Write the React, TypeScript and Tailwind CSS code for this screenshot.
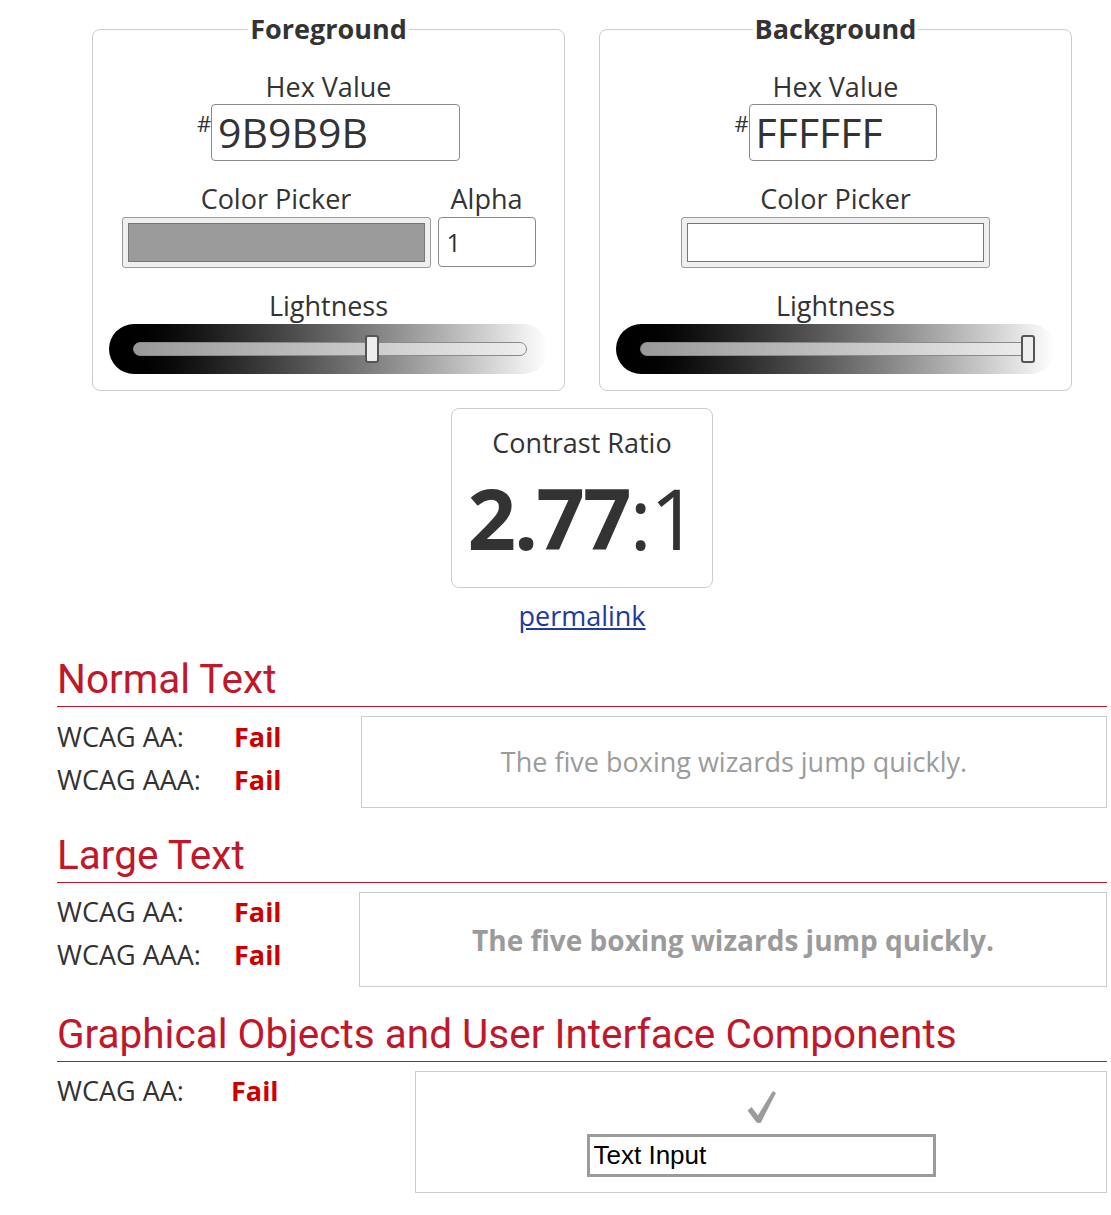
import React from "react";

interface ColorPanelProps {
  title: string;
  hex: string;
  swatch: string;
  hexWidth: string;
  thumbLeft: string;
  showAlpha: boolean;
}

const ColorPanel: React.FC<ColorPanelProps> = ({
  title,
  hex,
  swatch,
  hexWidth,
  thumbLeft,
  showAlpha,
}) => {
  return (
    <fieldset className="w-[473px] border border-[#cccccc] rounded-[8px] px-[16px] pb-[16px]">
      <legend className="mx-auto px-[2px] text-[27px] leading-[36px] font-bold">
        {title}
      </legend>

      {/* Hex value */}
      <div className="mt-[24px] text-center text-[27px] leading-[32px]">
        Hex Value
      </div>
      <div className="mt-[1px] flex justify-center items-start">
        <span className="text-[22px] leading-[22px] mt-[8px]">#</span>
        <input
          readOnly
          value={hex}
          className={`${hexWidth} h-[57px] border border-[#888888] rounded-[4px] pl-[6px] text-[41px] text-[#333333] outline-none`}
        />
      </div>

      {/* Color picker + alpha */}
      <div className="mt-[22px] flex justify-center gap-[7px]">
        <div className="flex flex-col items-center">
          <div className="text-[27px] leading-[32px]">Color Picker</div>
          <div className="mt-[2px] w-[309px] h-[51px] rounded-[3px] border border-[#999999] bg-[#efefef] p-[5px]">
            <div
              className={`w-full h-full border border-[#777777] ${swatch}`}
            ></div>
          </div>
        </div>
        {showAlpha && (
          <div className="flex flex-col items-center">
            <div className="text-[27px] leading-[32px]">Alpha</div>
            <input
              readOnly
              value="1"
              className="mt-[2px] w-[98px] h-[50px] border border-[#888888] rounded-[4px] pl-[8px] text-[25px] text-[#333333] outline-none"
            />
          </div>
        )}
      </div>

      {/* Lightness slider */}
      <div className="mt-[22px] text-center text-[27px] leading-[32px]">
        Lightness
      </div>
      <div className="mt-[2px] h-[50px] rounded-full bg-gradient-to-r from-black to-white pl-[24px] pr-[21px] flex items-center">
        <div className="relative w-full h-[14px] rounded-full border border-[#8a8a8a] bg-gradient-to-r from-[#999999] to-[#eeeeee]">
          <div
            className={`absolute top-[-8px] ${thumbLeft} w-[14px] h-[28px] rounded-[3px] border-2 border-[#555555] bg-[#eeeeee]`}
          ></div>
        </div>
      </div>
    </fieldset>
  );
};

interface ResultRow {
  label: string;
  result: string;
}

const Results: React.FC<{ rows: ResultRow[]; labelWidth: string }> = ({
  rows,
  labelWidth,
}) => (
  <div className="flex flex-col">
    {rows.map((row) => (
      <div key={row.label} className="flex text-[27px] leading-[43px]">
        <span className={labelWidth}>{row.label}</span>
        <span className="font-bold text-[#cc0000]">{row.result}</span>
      </div>
    ))}
  </div>
);

const Heading: React.FC<{ children: React.ReactNode }> = ({ children }) => (
  <h2 className="font-['Roboto',sans-serif] text-[40.5px] leading-[48px] text-[#c0182a] pb-[3px] border-b border-[#c0182a]">
    {children}
  </h2>
);

export default function App() {
  return (
    <div className="min-h-screen bg-white text-[#333333] font-['Open_Sans',sans-serif] pt-[11px] pb-[20px]">
      <div className="ml-[57px] w-[1050px]">
        {/* Color inputs */}
        <div className="flex justify-center gap-[34px]">
          <ColorPanel
            title="Foreground"
            hex="9B9B9B"
            swatch="bg-[#9b9b9b]"
            hexWidth="w-[249px]"
            thumbLeft="left-[231px]"
            showAlpha={true}
          />
          <ColorPanel
            title="Background"
            hex="FFFFFF"
            swatch="bg-white"
            hexWidth="w-[188px]"
            thumbLeft="left-[380px]"
            showAlpha={false}
          />
        </div>

        {/* Contrast ratio */}
        <div className="mt-[17px] flex flex-col items-center">
          <div className="w-[262px] h-[180px] border border-[#cccccc] rounded-[8px] flex flex-col items-center">
            <div className="mt-[17px] text-[27px] leading-[34px]">
              Contrast Ratio
            </div>
            <div className="mt-[13px] text-[85px] leading-[88px] tracking-[-2px]">
              <span className="font-bold">2.77</span>
              <span>:1</span>
            </div>
          </div>
          <a
            href="#"
            className="mt-[12px] text-[27px] leading-[32px] text-[#1f3a9e] underline"
          >
            permalink
          </a>
        </div>

        {/* Normal text */}
        <section className="mt-[23px]">
          <Heading>Normal Text</Heading>
          <div className="mt-[9px] flex">
            <div className="w-[304px] -mt-[1px]">
              <Results
                labelWidth="w-[177px]"
                rows={[
                  { label: "WCAG AA:", result: "Fail" },
                  { label: "WCAG AAA:", result: "Fail" },
                ]}
              />
            </div>
            <div className="flex-1 h-[92px] border border-[#cccccc] flex items-center justify-center">
              <p className="text-[27px] text-[#9b9b9b]">
                The five boxing wizards jump quickly.
              </p>
            </div>
          </div>
        </section>

        {/* Large text */}
        <section className="mt-[23px]">
          <Heading>Large Text</Heading>
          <div className="mt-[9px] flex">
            <div className="w-[302px] -mt-[2px]">
              <Results
                labelWidth="w-[177px]"
                rows={[
                  { label: "WCAG AA:", result: "Fail" },
                  { label: "WCAG AAA:", result: "Fail" },
                ]}
              />
            </div>
            <div className="flex-1 h-[95px] border border-[#cccccc] flex items-center justify-center">
              <p className="text-[28px] font-bold text-[#9b9b9b]">
                The five boxing wizards jump quickly.
              </p>
            </div>
          </div>
        </section>

        {/* Graphical objects */}
        <section className="mt-[23px]">
          <Heading>Graphical Objects and User Interface Components</Heading>
          <div className="mt-[9px] flex">
            <div className="w-[358px] -mt-[2px]">
              <Results
                labelWidth="w-[174px]"
                rows={[{ label: "WCAG AA:", result: "Fail" }]}
              />
            </div>
            <div className="flex-1 h-[122px] border border-[#cccccc] flex flex-col items-center">
              <svg
                width="30"
                height="34"
                viewBox="0 0 30 34"
                className="mt-[18px] ml-[2px]"
              >
                <path
                  d="M1 20.5 L4.5 17.5 L11 26 L26 1.5 L28.5 3 L13.5 32.5 L10 32.5 Z"
                  fill="#9b9b9b"
                  stroke="#9b9b9b"
                  strokeWidth="0.8"
                  strokeLinejoin="round"
                />
              </svg>
              <input
                readOnly
                value="Text Input"
                className="mt-[10px] w-[349px] h-[43px] border-[3px] border-[#9b9b9b] px-[4px] font-['Liberation_Sans',sans-serif] text-[26px] text-black outline-none"
              />
            </div>
          </div>
        </section>
      </div>
    </div>
  );
}
